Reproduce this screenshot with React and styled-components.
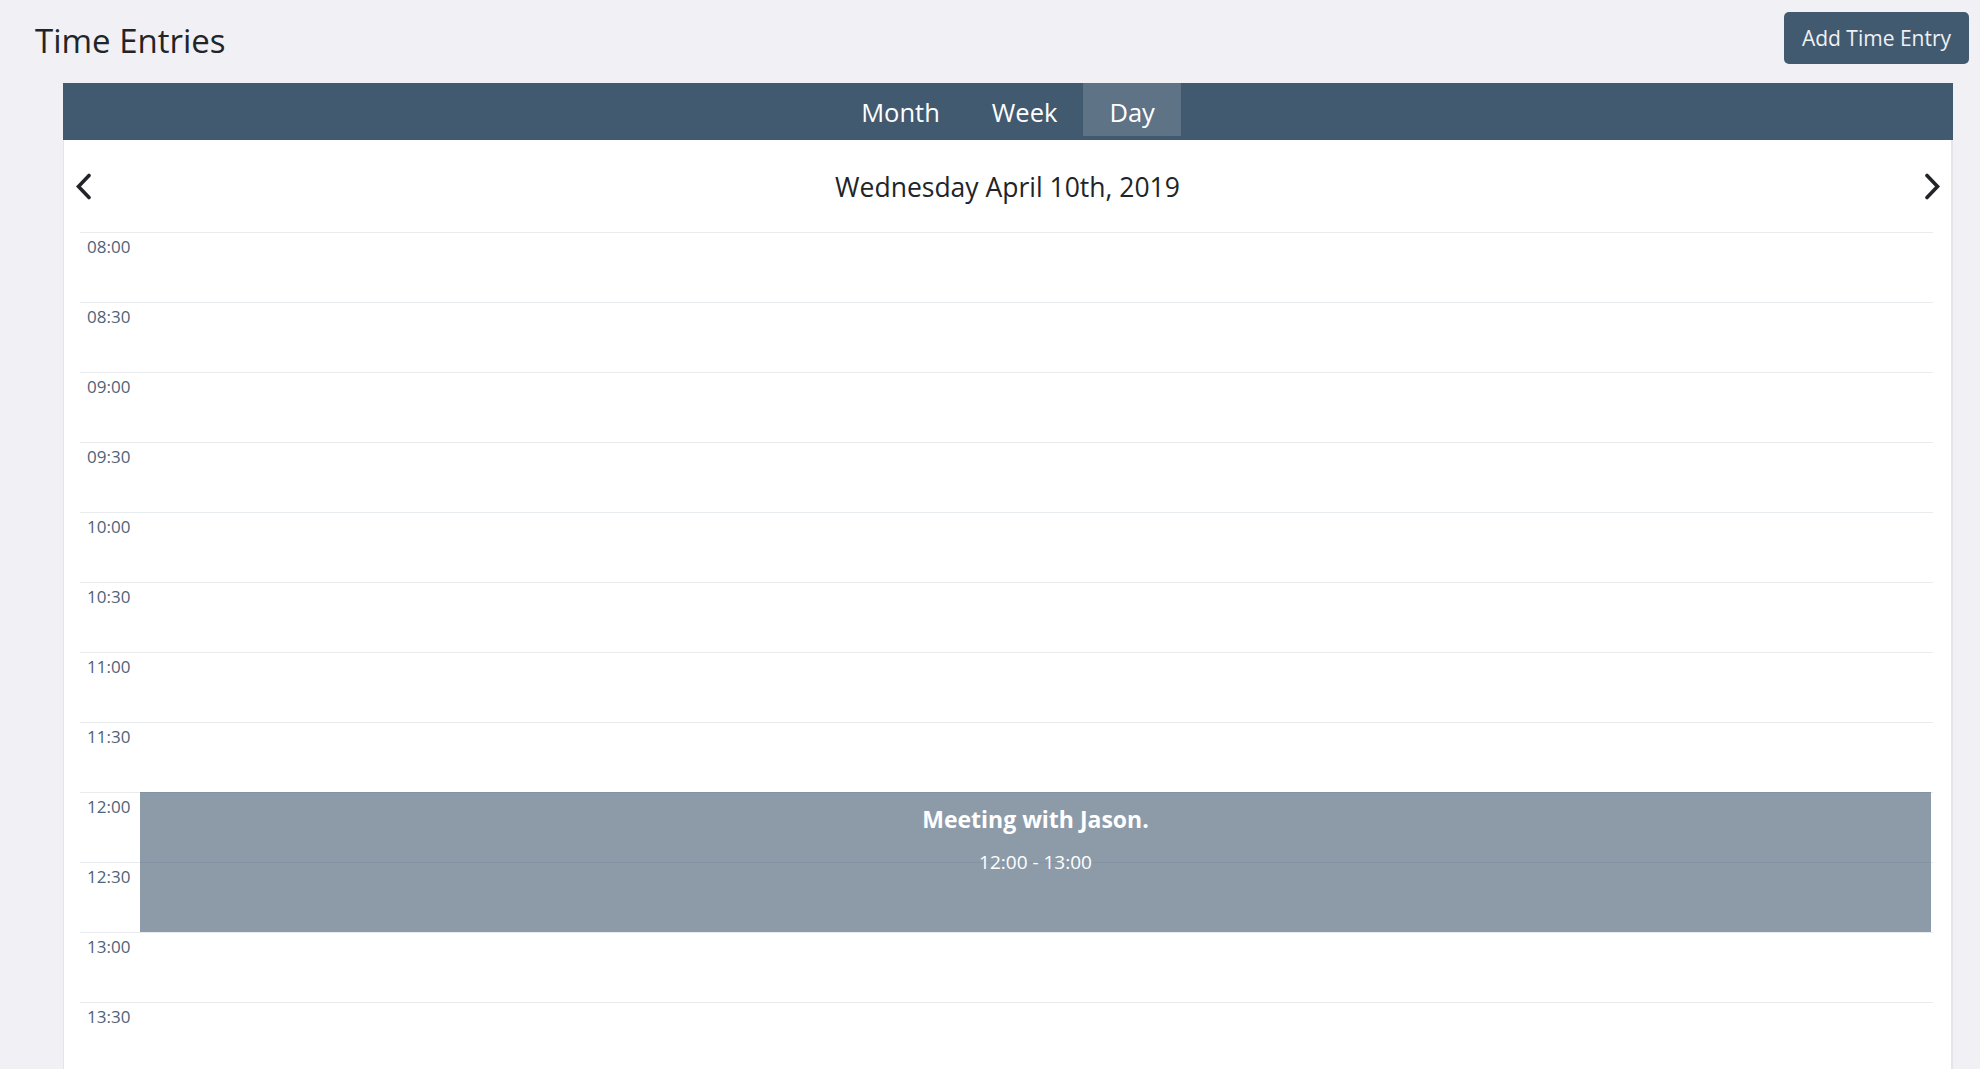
import styled, { createGlobalStyle } from "styled-components";

const GlobalStyle = createGlobalStyle`
    body {
        margin: 0;
        background-color: #f0f0f5;
        font-family: "Open Sans", "Noto Sans", sans-serif;
        color: #212529;
    }
`;

const Page = styled.div`
    width: 100%;
    min-height: 100vh;
`;

const TopBar = styled.div`
    display: flex;
    align-items: flex-start;
    justify-content: space-between;
    padding: 12px 11px 0 35px;
    height: 71px;
    box-sizing: border-box;
`;

const Title = styled.h2`
    margin: 9px 0 0;
    font-size: 33px;
    font-weight: 400;
    line-height: 1.2;
`;

const AddButton = styled.button`
    width: 185px;
    height: 52px;
    border: none;
    border-radius: 5px;
    background-color: #425a70;
    color: #eef0f4;
    font-family: inherit;
    font-size: 21px;
    cursor: pointer;
`;

const Card = styled.div`
    margin: 12px 27px 0 63px;
    background-color: #fff;
    border-left: 1px solid #e4e4ea;
    border-right: 2px solid #e4e4ea;
`;

const TabBar = styled.div`
    height: 57px;
    background-color: #425a70;
    display: flex;
    justify-content: center;
    margin-right: -2px;
    margin-left: -1px;
`;

const Tab = styled.div`
    height: ${({ active }) => (active ? "53px" : "57px")};
    padding: ${({ active }) => (active ? "4px 26px 0" : "0 26px")};
    display: flex;
    align-items: center;
    box-sizing: border-box;
    color: #fff;
    font-size: 25.5px;
    background-color: ${({ active }) => (active ? "#5e7386" : "transparent")};
    cursor: pointer;
`;

const Body = styled.div`
    padding: 0 16px 0 16px;
`;

const NavRow = styled.div`
    height: 92px;
    margin: 0 -7px;
    display: flex;
    align-items: center;
    justify-content: space-between;
`;

const NavButton = styled.button`
    border: none;
    background: none;
    padding: 0;
    width: 20px;
    height: 30px;
    display: flex;
    align-items: center;
    justify-content: center;
    cursor: pointer;
`;

const DateLabel = styled.div`
    font-size: 26.5px;
    color: #212529;
    padding-top: 2px;
`;

const Grid = styled.div`
    position: relative;
    margin-right: 2px;
`;

const Row = styled.div`
    height: 70px;
    display: flex;
    border-top: 1px solid #e9ecef;
    box-sizing: border-box;
`;

const TimeLabel = styled.div`
    width: 60px;
    padding: 2px 0 0 7px;
    box-sizing: border-box;
    font-size: 17px;
    color: #4f6378;
`;

const Cell = styled.div`
    flex: 1;
`;

const Event = styled.div`
    position: absolute;
    left: 60px;
    right: 2px;
    background-color: rgba(65, 88, 112, 0.6);
    color: #fff;
    display: flex;
    flex-direction: column;
    align-items: center;
    padding-top: 11px;
    box-sizing: border-box;
`;

const EventTitle = styled.div`
    font-size: 23px;
    font-weight: 700;
`;

const EventTime = styled.div`
    margin-top: 14px;
    font-size: 19px;
`;

const Chevron = ({ dir }) => (
    <svg width="17" height="27" viewBox="0 0 17 27">
        <polyline
            points={dir === "left" ? "14,2.5 3.5,13.5 14,24.5" : "3,2.5 13.5,13.5 3,24.5"}
            fill="none"
            stroke="#212529"
            strokeWidth="3.6"
            strokeLinecap="round"
            strokeLinejoin="miter"
        />
    </svg>
);

const times = [];
for (let h = 8; h < 18; h++) {
    const hh = String(h).padStart(2, "0");
    times.push(`${hh}:00`, `${hh}:30`);
}

const entries = [
    { title: "Meeting with Jason.", start: "12:00", end: "13:00" },
];

const slotIndex = (t) => {
    const [h, m] = t.split(":").map(Number);
    return (h - 8) * 2 + m / 30;
};

function App() {
    return (
        <Page>
            <GlobalStyle />
            <TopBar>
                <Title>Time Entries</Title>
                <AddButton>Add Time Entry</AddButton>
            </TopBar>
            <Card>
                <TabBar>
                    <Tab>Month</Tab>
                    <Tab>Week</Tab>
                    <Tab active>Day</Tab>
                </TabBar>
                <Body>
                    <NavRow>
                        <NavButton>
                            <Chevron dir="left" />
                        </NavButton>
                        <DateLabel>Wednesday April 10th, 2019</DateLabel>
                        <NavButton>
                            <Chevron dir="right" />
                        </NavButton>
                    </NavRow>
                    <Grid>
                        {times.map((t) => (
                            <Row key={t}>
                                <TimeLabel>{t}</TimeLabel>
                                <Cell />
                            </Row>
                        ))}
                        {entries.map((e) => {
                            const top = slotIndex(e.start) * 70;
                            const height = (slotIndex(e.end) - slotIndex(e.start)) * 70;
                            return (
                                <Event key={e.title} style={{ top, height }}>
                                    <EventTitle>{e.title}</EventTitle>
                                    <EventTime>
                                        {e.start} - {e.end}
                                    </EventTime>
                                </Event>
                            );
                        })}
                    </Grid>
                </Body>
            </Card>
        </Page>
    );
}

export default App;
